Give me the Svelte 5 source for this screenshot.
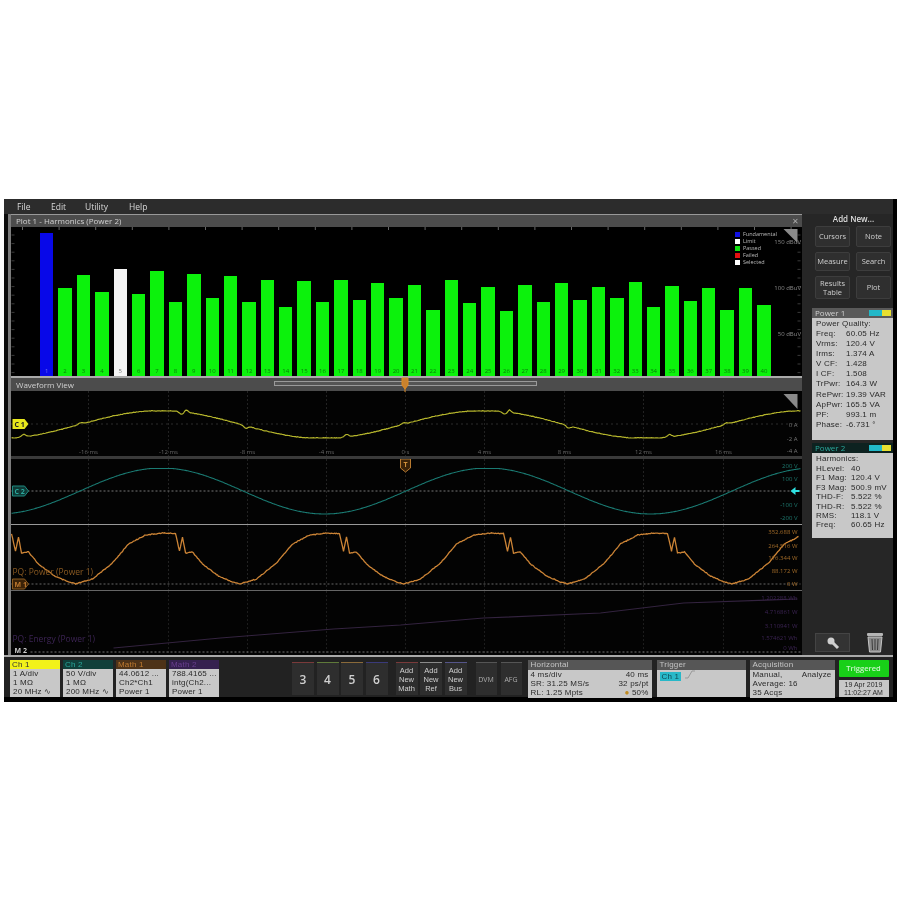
<script>
	// harmonics bar tops, measured as y inside the plot (plot starts at 227, ends 376)
	const barTops = [233, 288, 275, 292, 269, 294, 271, 302, 274, 298, 276, 302, 280, 307, 281, 302, 280, 300, 283, 298, 285, 310, 280, 303, 287, 311, 285, 302, 283, 300, 287, 298, 282, 307, 286, 301, 288, 310, 288, 305];
	const bars = barTops.map((top, i) => ({
		n: i + 1,
		h: 376 - top,
		kind: i === 0 ? 'fund' : i === 4 ? 'sel' : 'pass'
	}));

	const legend = [
		['#1010e0', 'Fundamental'],
		['#ffffff', 'Limit'],
		['#10e010', 'Passed'],
		['#e01010', 'Failed'],
		['#ffffff', 'Selected']
	];

	function jitter(x, scale) {
		const s = Math.sin(x * 12.9898) * 43758.5453;
		return (s - Math.floor(s) - 0.5) * scale;
	}
	function bump(x, c, w, a) {
		return a * Math.exp(-((x - c) * (x - c)) / (2 * w * w));
	}
	function toPts(fn, from = 11, to = 800) {
		const out = [];
		for (let x = from; x <= to; x += 1) out.push(x + ',' + fn(x).toFixed(1));
		return out.join(' ');
	}

	const P = 323;
	function yellow(x) {
		let y = 423.5 - 14 * Math.max(-0.95, Math.min(0.97, Math.cos(((x - 160) / P) * 2 * Math.PI)));
		for (let k = -1; k < 3; k++) {
			const o = k * P;
			y += bump(x, 181 + o, 2, 2.5) + bump(x, 186 + o, 1.5, -2.5) + bump(x, 245 + o, 2, 2.5);
			y += bump(x, 346 + o, 2, -2.5) + bump(x, 80 + o, 2, -1.5);
		}
		return y + jitter(x, 0.5);
	}
	function cyan(x) {
		return 490 - 23 * Math.max(-1, Math.min(0.98, Math.cos(((x - 161) / 326) * 2 * Math.PI)));
	}
	const powerCycle = [[0, 583], [17, 578], [37, 562], [53, 543], [70, 534], [87, 532], [100, 532.5], [104, 550], [107, 536], [110, 552], [117, 551], [127, 563], [143, 575], [157, 581], [165, 583]];
	function orange(x) {
		const u = ((x - 75) % 164 + 164) % 164;
		for (let i = 1; i < powerCycle.length; i++) {
			const [a, ya] = powerCycle[i - 1];
			const [b, yb] = powerCycle[i];
			if (u <= b) return ya + ((yb - ya) * (u - a)) / (b - a) + jitter(x, 0.8);
		}
		return 583;
	}
	const yellowLine = toPts(yellow);
	const cyanLine = toPts(cyan);
	const orangeLine = toPts(orange, 11, 798);
	const energyLine = '113,647 220,637 333,628 400,624 483,617 600,612 683,602 797,598';

	const gridX = [88, 168, 247, 326, 405, 484, 564, 643, 723];
	const timeLabels = ['-16 ms', '-12 ms', '-8 ms', '-4 ms', '0 s', '4 ms', '8 ms', '12 ms', '16 ms'];
	const topTicks = Array.from({ length: 22 }, (_, i) => 22 + i * 36.6);
	const sideTicks = Array.from({ length: 17 }, (_, i) => 235 + i * 8.6);

	const power1 = [
		['Freq:', '60.05 Hz'], ['Vrms:', '120.4 V'], ['Irms:', '1.374 A'], ['V CF:', '1.428'], ['I CF:', '1.508'],
		['TrPwr:', '164.3 W'], ['RePwr:', '19.39 VAR'], ['ApPwr:', '165.5 VA'], ['PF:', '993.1 m'], ['Phase:', '-6.731 °']
	];
	const power2 = [
		['HLevel:', '40'], ['F1 Mag:', '120.4 V'], ['F3 Mag:', '500.9 mV'], ['THD-F:', '5.522 %'],
		['THD-R:', '5.522 %'], ['RMS:', '118.1 V'], ['Freq:', '60.65 Hz']
	];
	const channels = [
		{ name: 'Ch 1', cls: 'c1', lines: ['1 A/div', '1 MΩ', '20 MHz  ∿'] },
		{ name: 'Ch 2', cls: 'c2', lines: ['50 V/div', '1 MΩ', '200 MHz ∿'] },
		{ name: 'Math 1', cls: 'c3', lines: ['44.0612 ...', 'Ch2*Ch1', 'Power 1'] },
		{ name: 'Math 2', cls: 'c4', lines: ['788.4165 ...', 'intg(Ch2...', 'Power 1'] }
	];
	const numbers = [['3', '#7a3a3a'], ['4', '#5f7a3a'], ['5', '#8a6a3a'], ['6', '#3a3a7a']];
	const addNew = [['Math', '#7a3a3a'], ['Ref', '#8a8a8a'], ['Bus', '#55558a']];
</script>

<div class="page">
	<div class="screen">
		<nav class="menu">
			<span class="m1">File</span>
			<span class="m2">Edit</span>
			<span class="m3">Utility</span>
			<span class="m4">Help</span>
		</nav>

		<div class="main">
			<div class="views">
				<div class="title">Plot 1 - Harmonics (Power 2)<span class="close">✕</span></div>
				<div class="plot">
					<svg class="ticks" viewBox="11 227 790 149">
						{#each topTicks as x}
							<line x1={x} x2={x} y1="227" y2="230" stroke="#666" />
						{/each}
						{#each sideTicks as y}
							<line x1="11" x2="14" y1={y} y2={y} stroke="#3a3a3a" />
							<line x1="797" x2="800" y1={y} y2={y} stroke="#3a3a3a" />
						{/each}
						<polygon points="783,229 797,229 797,243" fill="#8a8a8a" />
					</svg>
					<div class="bars">
						{#each bars as b}
							<div class="bar {b.kind}" style="height:{b.h}px"><span>{b.n}</span></div>
						{/each}
					</div>
					<ul class="legend">
						{#each legend as [c, t]}
							<li><i style="background:{c}"></i>{t}</li>
						{/each}
					</ul>
					<span class="db d1">150 dBuV</span>
					<span class="db d2">100 dBuV</span>
					<span class="db d3">50 dBuV</span>
				</div>

				<div class="title wf">
					Waveform View
					<div class="scroller"></div>
					<svg class="trig" viewBox="0 0 10 14"><path d="M2 0h6v7l-3 4-3-4z M5 11v3" fill="#c9822e" stroke="#e08a20" /></svg>
				</div>

				<div class="pane p1">
					<svg viewBox="11 390 790 65">
						{#each gridX as x}
							<line x1={x} x2={x} y1="390" y2="455" stroke="#222" stroke-dasharray="2 2" />
						{/each}
						<line x1="11" x2="800" y1="423" y2="423" stroke="#555" stroke-dasharray="1 4" />
						<polyline points={yellowLine} fill="none" stroke="#b4b42c" stroke-width="1.2" />
						{#each gridX as x, i}
							<text x={x} y="453" class="tl" text-anchor="middle">{timeLabels[i]}</text>
						{/each}
						<text x="797" y="426" class="ax" fill="#777" text-anchor="end">0 A</text>
						<text x="797" y="440" class="ax" fill="#777" text-anchor="end">-2 A</text>
						<text x="797" y="452" class="ax" fill="#777" text-anchor="end">-4 A</text>
						<polygon points="12,418 24,418 28,423 24,428 12,428" fill="#e8e81c" />
						<text x="14" y="426" class="badge" fill="#222">C 1</text>
						<polygon points="783,393 797,393 797,408" fill="#8a8a8a" />
					</svg>
				</div>
				<div class="pane p2">
					<svg viewBox="11 458 790 65">
						{#each gridX as x}
							<line x1={x} x2={x} y1="458" y2="523" stroke="#222" stroke-dasharray="2 2" />
						{/each}
						<line x1="11" x2="800" y1="490" y2="490" stroke="#777" stroke-dasharray="2 2" />
						<polyline points={cyanLine} fill="none" stroke="#1a7a72" stroke-width="1.1" />
						<path d="M400 458h10v9l-5 4-5-4z" fill="#3a2208" stroke="#b87a30" />
						<text x="405" y="466" class="badge" fill="#d0903a" text-anchor="middle">T</text>
						<text x="797" y="467" class="ax" fill="#1f7a70" text-anchor="end">200 V</text>
						<text x="797" y="480" class="ax" fill="#1f7a70" text-anchor="end">100 V</text>
						<text x="797" y="506" class="ax" fill="#1f7a70" text-anchor="end">-100 V</text>
						<text x="797" y="519" class="ax" fill="#1f7a70" text-anchor="end">-200 V</text>
						<path d="M790 490l5-4v3h4v2h-4v3z" fill="#2ee0e0" />
						<polygon points="12,485 24,485 28,490 24,495 12,495" fill="#0f3a36" stroke="#1f8a80" />
						<text x="14" y="493" class="badge" fill="#2aa89c">C 2</text>
					</svg>
				</div>
				<div class="pane p3">
					<svg viewBox="11 524 790 65">
						{#each gridX as x}
							<line x1={x} x2={x} y1="524" y2="589" stroke="#222" stroke-dasharray="2 2" />
						{/each}
						<line x1="11" x2="800" y1="583" y2="583" stroke="#666" stroke-dasharray="2 2" />
						<polyline points={orangeLine} fill="none" stroke="#cc8436" stroke-width="1.3" />
						<text x="12" y="574" class="name" fill="#8a5a22">PQ: Power (Power 1)</text>
						<polygon points="12,578 24,578 28,583 24,588 12,588" fill="#3a2208" stroke="#8a5a20" />
						<text x="14" y="586" class="badge" fill="#c07a30">M 1</text>
						<text x="797" y="533" class="ax" fill="#a06a28" text-anchor="end">352.688 W</text>
						<text x="797" y="547" class="ax" fill="#a06a28" text-anchor="end">264.516 W</text>
						<text x="797" y="559" class="ax" fill="#a06a28" text-anchor="end">176.344 W</text>
						<text x="797" y="572" class="ax" fill="#a06a28" text-anchor="end">88.172 W</text>
						<text x="797" y="585" class="ax" fill="#a06a28" text-anchor="end">0 W</text>
					</svg>
				</div>
				<div class="pane p4">
					<svg viewBox="11 590 790 64">
						{#each gridX as x}
							<line x1={x} x2={x} y1="590" y2="654" stroke="#1c1c1c" stroke-dasharray="2 2" />
						{/each}
						<line x1="30" x2="800" y1="651" y2="651" stroke="#777" stroke-dasharray="2 2" />
						<polyline points={energyLine} fill="none" stroke="#33233f" stroke-width="1.2" />
						<text x="12" y="641" class="name" fill="#3c2454">PQ: Energy (Power 1)</text>
						<text x="14" y="652" class="badge" fill="#ccc">M 2</text>
						<text x="797" y="599" class="ax" fill="#3c2454" text-anchor="end">1.202288 Wh</text>
						<text x="797" y="613" class="ax" fill="#3c2454" text-anchor="end">4.716861 W</text>
						<text x="797" y="627" class="ax" fill="#3c2454" text-anchor="end">3.110941 W</text>
						<text x="797" y="639" class="ax" fill="#3c2454" text-anchor="end">1.574621 Wh</text>
						<text x="797" y="649" class="ax" fill="#3c2454" text-anchor="end">0 Wh</text>
					</svg>
				</div>
			</div>

			<aside class="side">
				<div class="addnew">Add New...</div>
				<div class="btns">
					<button>Cursors</button>
					<button>Note</button>
					<button>Measure</button>
					<button>Search</button>
					<button class="tall">Results<br />Table</button>
					<button class="tall">Plot</button>
				</div>

				<section class="res r1">
					<header>Power 1<b></b></header>
					<div class="res-body">
						<div class="heading">Power Quality:</div>
						{#each power1 as [k, v]}
							<div class="kv"><span>{k}</span><span>{v}</span></div>
						{/each}
					</div>
				</section>
				<section class="res r2">
					<header class="dark">Power 2<b></b></header>
					<div class="res-body">
						<div class="heading">Harmonics:</div>
						{#each power2 as [k, v]}
							<div class="kv wide"><span>{k}</span><span>{v}</span></div>
						{/each}
					</div>
				</section>

				<div class="tools">
					<div class="zoomer">
						<svg width="14" height="14" viewBox="0 0 14 14"><circle cx="5" cy="5" r="3.5" fill="#cfcfcf" /><path d="M7 7l5 5" stroke="#cfcfcf" stroke-width="3" /></svg>
					</div>
					<svg class="trash" width="18" height="22" viewBox="0 0 18 22">
						<rect x="1" y="2" width="16" height="3" rx="1" fill="#b5b5b5" />
						<path d="M2 6h14l-1.5 15h-11z" fill="#8a8a8a" stroke="#c5c5c5" />
						<path d="M6 8l.5 11M9 8v11M12 8l-.5 11" stroke="#3a3a3a" />
					</svg>
				</div>
			</aside>
		</div>

		<footer class="bottom">
			<div class="chans">
				{#each channels as c}
					<div class="chan {c.cls}">
						<div class="chan-head">{c.name}</div>
						<div class="chan-body">
							{#each c.lines as l}<div>{l}</div>{/each}
						</div>
					</div>
				{/each}
			</div>

			<div class="nums">
				{#each numbers as [n, c]}
					<div class="num" style="border-top-color:{c}">{n}</div>
				{/each}
			</div>

			<div class="adds">
				{#each addNew as [t, c]}
					<div class="add" style="border-top-color:{c}">Add<br />New<br />{t}</div>
				{/each}
			</div>

			<div class="extras">
				<div class="extra">DVM</div>
				<div class="extra">AFG</div>
			</div>

			<div class="info horiz">
				<div class="info-head">Horizontal</div>
				<div class="info-body">
					<div class="cols"><span>4 ms/div</span><span>40 ms</span></div>
					<div class="cols"><span>SR: 31.25 MS/s</span><span>32 ps/pt</span></div>
					<div class="cols"><span>RL: 1.25 Mpts</span><span><em>●</em> 50%</span></div>
				</div>
			</div>
			<div class="info trigbox">
				<div class="info-head">Trigger</div>
				<div class="info-body"><span class="trigch">Ch 1</span><svg width="12" height="9" viewBox="0 0 12 9"><path d="M1 8h3l4-7h3" fill="none" stroke="#999" /></svg></div>
			</div>
			<div class="info acq">
				<div class="info-head">Acquisition</div>
				<div class="info-body">
					<div class="cols"><span>Manual,</span><span>Analyze</span></div>
					<div>Average: 16</div>
					<div>35 Acqs</div>
				</div>
			</div>

			<div class="status">
				<div class="triggered">Triggered</div>
				<div class="date">19 Apr 2019<br />11:02:27 AM</div>
			</div>
		</footer>
	</div>
</div>

<style>
	:global(body) {
		margin: 0;
		background: #fff;
	}
	.page {
		height: 900px;
		padding: 199px 3px 0 4px;
		box-sizing: border-box;
		font-family: "Open Sans", "Liberation Sans", sans-serif;
	}
	.screen {
		height: 503px;
		background: #262626;
		border-right: 4px solid #000;
		display: flex;
		flex-direction: column;
		filter: blur(0.6px);
		color: #ddd;
		overflow: hidden;
	}
	.menu {
		height: 15px;
		flex: none;
		font-size: 8.5px;
		line-height: 15px;
		background: #2c2c2c;
		position: relative;
		display: flex;
		color: #d8d8d8;
	}
	.m1 { margin-left: 13px; width: 34px; }
	.m2 { width: 34px; }
	.m3 { width: 44px; }

	.main {
		display: flex;
		height: 441px;
		flex: none;
	}
	.views {
		width: 798px;
		padding-left: 3px;
		box-sizing: border-box;
		flex: none;
		background: #7c7c7c;
		display: flex;
		flex-direction: column;
		border-left: 4px solid #0c0c0c;
	}
	.title {
		height: 12px;
		padding-left: 5px;
		background: #4c4c4c;
		border-top: 1px solid #999;
		font-size: 8px;
		line-height: 12px;
		color: #d0d0d0;
		position: relative;
		flex: none;
	}
	.close {
		position: absolute;
		right: 3px;
		top: 0;
		font-size: 8px;
		color: #aaa;
	}
	.plot {
		height: 149px;
		flex: none;
		position: relative;
		background: #000;
		display: flex;
		align-items: flex-end;
		overflow: hidden;
	}
	.ticks {
		position: absolute;
		inset: 0;
		width: 100%;
		height: 100%;
	}
	.bars {
		display: flex;
		align-items: flex-end;
		gap: 5px;
		margin-left: 29px;
	}
	.bar {
		width: 13.4px;
		flex: none;
		text-align: center;
		font-size: 6px;
		line-height: 8px;
		color: #0a7a0a;
		display: flex;
		flex-direction: column;
		justify-content: flex-end;
		padding-bottom: 1px;
		box-sizing: border-box;
	}
	.pass { background: #0cf20c; }
	.fund { background: #0808e8; color: #6a6af0; }
	.sel { background: #f4f4f4; color: #777; }

	.legend {
		position: absolute;
		left: 724px;
		top: 4px;
		margin: 0;
		padding: 0;
		list-style: none;
		font-size: 5.5px;
		line-height: 7px;
		color: #bbb;
	}
	.legend li {
		display: flex;
		align-items: center;
		gap: 3px;
	}
	.legend i {
		width: 5px;
		height: 5px;
		display: block;
	}
	.db {
		position: absolute;
		right: 1px;
		font-size: 6px;
		color: #888;
	}
	.d1 { top: 11px; }
	.d2 { top: 57px; }
	.d3 { top: 103px; }

	.wf {
		height: 13px;
		line-height: 13px;
		border-top: 2px solid #aaa;
	}
	.scroller {
		position: absolute;
		left: 263px;
		top: 3px;
		width: 263px;
		height: 5px;
		background: #555;
		border: 1px solid #9a9a9a;
		box-sizing: border-box;
	}
	.trig {
		position: absolute;
		left: 389px;
		top: 0;
		width: 10px;
		height: 14px;
		overflow: visible;
	}

	.pane {
		background: #030303;
		flex: none;
	}
	.pane svg {
		display: block;
		width: 100%;
		height: 100%;
		overflow: hidden;
	}
	.p1 { height: 65px; border-bottom: 3px solid #3a3a3a; }
	.p2 { height: 65px; border-bottom: 1px solid #999; }
	.p3 { height: 65px; border-bottom: 1px solid #666; }
	.p4 { height: 64px; border-bottom: 1px solid #888; }
	.tl { font-size: 6px; fill: #666; }
	.ax { font-size: 6px; }
	.badge { font-size: 7px; font-weight: 700; }
	.name { font-size: 8.5px; }

	.side {
		width: 91px;
		flex: none;
		background: #262626;
		display: flex;
		flex-direction: column;
		padding: 0 0 0 12px;
		box-sizing: border-box;
	}
	.addnew {
		text-align: center;
		font-size: 8px;
		line-height: 10px;
		padding: 0 0 2px;
		font-weight: 600;
		color: #ddd;
	}
	.btns {
		display: grid;
		grid-template-columns: 35px 35px;
		grid-template-rows: 21px 19px 23px;
		gap: 5px 6px;
		margin-left: 1px;
	}
	button {
		background: #2f2f2f;
		border: 1px solid #3d3d3d;
		border-radius: 2px;
		color: #cfcfcf;
		font: inherit;
		font-size: 7.5px;
		line-height: 9px;
		padding: 0;
	}
	.res {
		margin-top: 9px;
		width: 81px;
		background: #c8c8c8;
		margin-left: -2px;
		flex: none;
	}
	.r2 { margin-top: 3px; }
	.res header {
		height: 10px;
		background: #5a5a5a;
		font-size: 8px;
		line-height: 10px;
		padding-left: 3px;
		color: #cfcfcf;
		position: relative;
	}
	.res header.dark {
		background: #0d2220;
		color: #2aa89c;
	}
	.res header b {
		position: absolute;
		right: 2px;
		top: 2px;
		width: 22px;
		height: 6px;
		background: linear-gradient(90deg, #22b8c8 60%, #e8e030 60%);
	}
	.res-body {
		padding: 1px 2px 0 4px;
		font-size: 8px;
		color: #2a2a2a;
		font-family: "Liberation Sans", sans-serif;
		letter-spacing: 0.2px;
	}
	.r1 .res-body { height: 121px; }
	.r2 .res-body { height: 84px; }
	.heading { line-height: 10px; }
	.kv {
		display: grid;
		grid-template-columns: 30px 1fr;
		line-height: 10.1px;
		white-space: nowrap;
	}
	.kv.wide {
		grid-template-columns: 35px 1fr;
		line-height: 9.4px;
	}
	.tools {
		margin-top: auto;
		display: flex;
		align-items: center;
		gap: 16px;
		padding: 0 0 1px 1px;
	}
	.zoomer {
		width: 35px;
		height: 19px;
		background: #333;
		border: 1px solid #444;
		box-sizing: border-box;
		display: flex;
		justify-content: center;
		align-items: center;
	}
	.trash { margin-bottom: 1px; }

	.bottom {
		flex: 1;
		display: flex;
		background: #222;
		border-top: 2px solid #aaa;
		padding: 3px 0 5px 6px;
		min-height: 0;
		box-shadow: inset 0 -5px 0 #000;
		box-sizing: border-box;
	}
	.chans {
		display: flex;
		gap: 3px;
		width: 282px;
		flex: none;
	}
	.chan {
		width: 50px;
		display: flex;
		flex-direction: column;
		font-size: 8px;
		font-family: "Liberation Sans", sans-serif;
		letter-spacing: 0.2px;
	}
	.chan-head {
		height: 9px;
		line-height: 9px;
		padding-left: 2px;
		flex: none;
	}
	.chan-body {
		flex: 1;
		background: #c8c8c8;
		color: #2a2a2a;
		padding: 0 1px 0 3px;
		line-height: 9.2px;
		white-space: nowrap;
		overflow: hidden;
	}
	.c1 .chan-head { background: #f2f21a; color: #333; }
	.c2 .chan-head { background: #103f3a; color: #2aa89c; }
	.c3 .chan-head { background: #4d3218; color: #c07a30; }
	.c4 .chan-head { background: #35214f; color: #6a3f90; }

	.nums, .adds, .extras {
		display: flex;
		gap: 2.5px;
		flex: none;
		margin-top: 2px;
		height: 33px;
	}
	.num, .add, .extra {
		width: 22px;
		background: #2e2e2e;
		border-top: 1px solid #555;
		display: flex;
		justify-content: center;
		align-items: center;
		text-align: center;
		box-sizing: border-box;
		color: #d0d0d0;
	}
	.num { font-size: 12px; font-weight: 600; }
	.add { font-size: 7.5px; line-height: 9px; font-family: "Liberation Sans", sans-serif; }
	.adds { margin-left: 8px; }
	.extras { margin-left: 9px; gap: 4px; }
	.extra { width: 21px; font-size: 7px; color: #aaa; }

	.info {
		flex: none;
		display: flex;
		flex-direction: column;
		font-size: 8px;
		font-family: "Liberation Sans", sans-serif;
		letter-spacing: 0.2px;
	}
	.info-head {
		height: 10px;
		line-height: 10px;
		background: #565656;
		color: #c5c5c5;
		padding-left: 3px;
		flex: none;
	}
	.info-body {
		flex: 1;
		background: #c8c8c8;
		color: #2a2a2a;
		padding: 0 3px;
		line-height: 9.2px;
		white-space: nowrap;
	}
	.cols {
		display: flex;
		justify-content: space-between;
	}
	.cols em {
		color: #c08a20;
		font-style: normal;
	}
	.horiz { width: 124px; margin-left: 6px; }
	.trigbox { width: 89px; margin-left: 5px; }
	.acq { width: 85px; margin-left: 4px; }
	.trigch {
		display: inline-block;
		background: #28b8c8;
		color: #0e4a55;
		padding: 0 2px;
		margin-right: 3px;
	}
	.status {
		width: 50px;
		margin-left: 4px;
		display: flex;
		flex-direction: column;
		gap: 3px;
		flex: none;
	}
	.triggered {
		height: 17px;
		background: #18d018;
		border-radius: 1px;
		text-align: center;
		color: #c8f4c8;
		font-size: 7.5px;
		line-height: 17px;
		font-weight: 600;
	}
	.date {
		flex: 1;
		background: #c8c8c8;
		color: #2a2a2a;
		font-size: 7px;
		line-height: 8px;
		text-align: center;
		padding-top: 1px;
		font-family: "Liberation Sans", sans-serif;
	}
</style>
